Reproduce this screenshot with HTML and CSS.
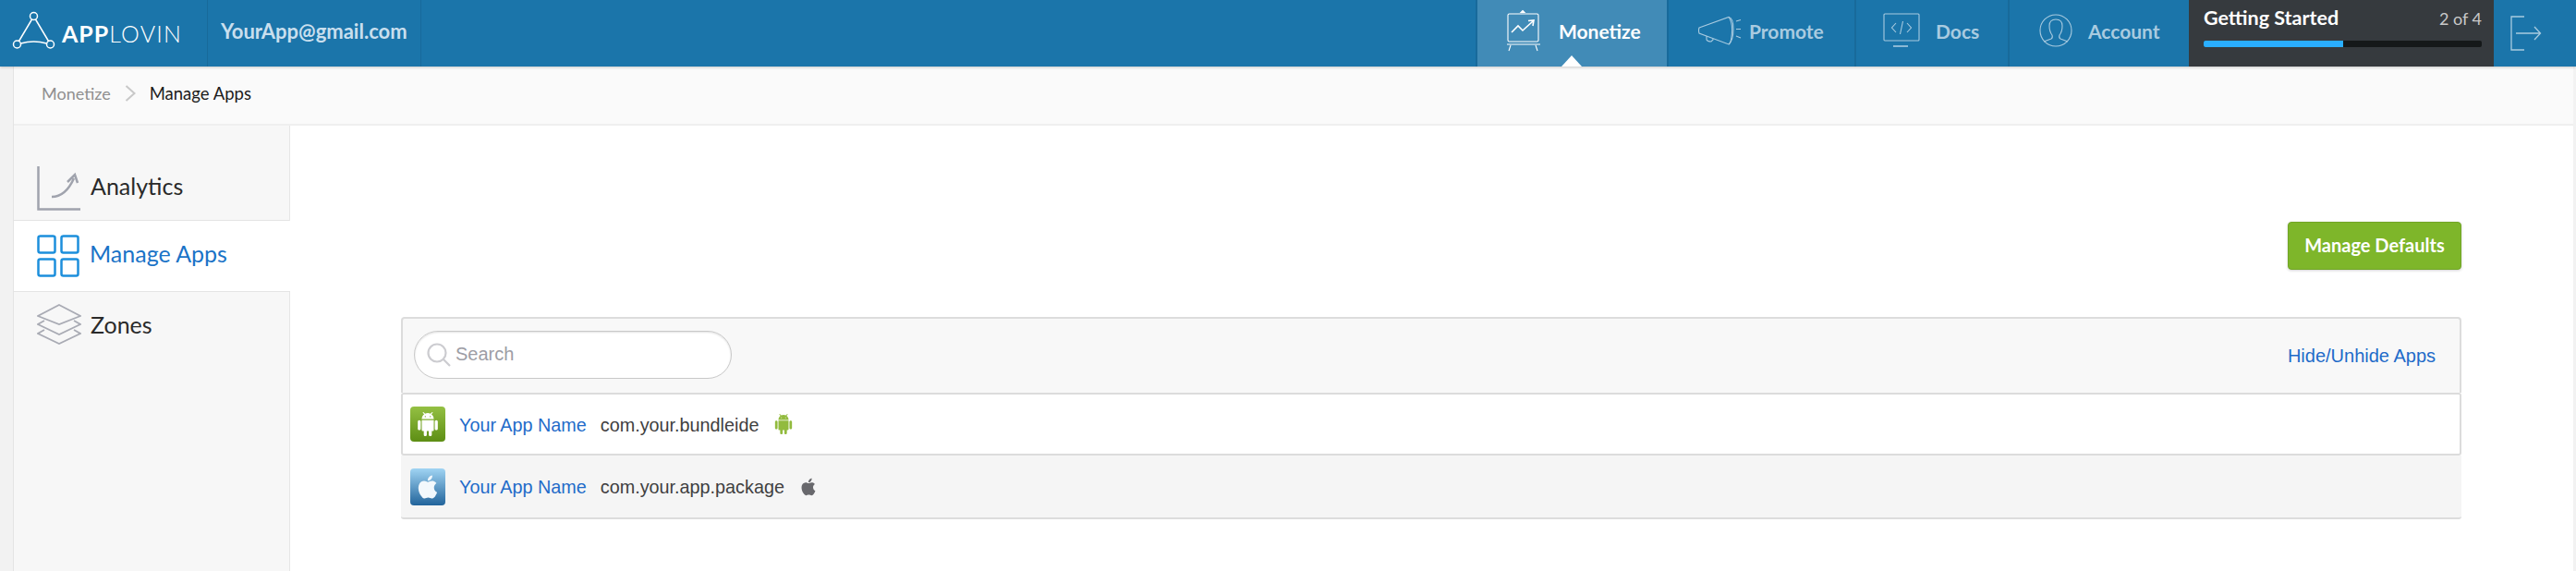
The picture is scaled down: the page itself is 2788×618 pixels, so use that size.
FILE: index.html
```html
<!DOCTYPE html>
<html lang="en">
<head>
  <meta charset="UTF-8" />
  <title>AppLovin - Manage Apps</title>
  <link rel="stylesheet" href="styles.css">
</head>
<body>
  <svg class="defs" width="0" height="0">
    <symbol id="android" viewBox="0 0 24 24"><path d="M6 18c0 .55.45 1 1 1h1v3.5c0 .83.67 1.5 1.5 1.5s1.5-.67 1.5-1.5V19h2v3.5c0 .83.67 1.5 1.5 1.5s1.5-.67 1.5-1.5V19h1c.55 0 1-.45 1-1V8H6v10zM3.5 8C2.67 8 2 8.67 2 9.5v7c0 .83.67 1.5 1.5 1.5S5 17.33 5 16.5v-7C5 8.67 4.33 8 3.5 8zm17 0c-.83 0-1.5.67-1.5 1.5v7c0 .83.67 1.5 1.5 1.5s1.5-.67 1.5-1.5v-7c0-.83-.67-1.5-1.5-1.5zm-4.97-5.84l1.3-1.3c.2-.2.2-.51 0-.71-.2-.2-.51-.2-.71 0l-1.48 1.48C13.85 1.23 12.95 1 12 1c-.96 0-1.86.23-2.66.63L7.85.15c-.2-.2-.51-.2-.71 0-.2.2-.2.51 0 .71l1.31 1.31C6.97 3.26 6 5.01 6 7h12c0-1.99-.97-3.75-2.47-4.84zM10 5H9V4h1v1zm5 0h-1V4h1v1z"/></symbol>
    <symbol id="apple" viewBox="0 0 24 24"><path d="M18.71 19.5c-.83 1.24-1.71 2.45-3.05 2.47-1.34.03-1.77-.79-3.29-.79-1.53 0-2 .77-3.27.82-1.31.05-2.3-1.32-3.14-2.53C4.25 17 2.94 12.45 4.7 9.39c.87-1.52 2.43-2.48 4.12-2.51 1.28-.02 2.5.87 3.29.87.78 0 2.26-1.07 3.81-.91.65.03 2.47.26 3.64 1.98-.09.06-2.17 1.28-2.15 3.81.03 3.02 2.65 4.03 2.68 4.04-.03.07-.42 1.44-1.38 2.83M13 3.5c.73-.83 1.94-1.46 2.94-1.5.13 1.17-.34 2.35-1.04 3.19-.69.85-1.83 1.51-2.95 1.42-.15-1.15.41-2.35 1.05-3.11z"/></symbol>
  </svg>

  <header class="topbar">
    <div class="brand">
      <svg class="brand-mark" width="48" height="44" viewBox="0 0 48 44" fill="none" stroke="#fff" stroke-width="1.5">
        <circle cx="23.5" cy="5.5" r="4"/>
        <circle cx="5.5" cy="36" r="4"/>
        <circle cx="41.5" cy="36" r="4"/>
        <path d="M21.5 9 7.5 32.5M25.5 9 39.5 32.5M9.5 35Q23.5 31 37.5 35"/>
      </svg>
      <span class="brand-name"><b>APP</b>LOVIN</span>
    </div>
    <div class="account-email">YourApp@gmail.com</div>
    <nav class="nav">
      <a class="nav-item active nav-monetize">
        <svg width="38" height="46" viewBox="0 0 38 46" fill="none" stroke="#fff" stroke-width="1.1">
          <path d="M18 1.5l2 2h-4z" fill="#fff"/>
          <rect x="2" y="5" width="33" height="30" rx="1.5"/>
          <path d="M1 38h36M5 39l-2 6M32 39l2 6"/>
          <path d="M6 25l7-7 5 5 11-10M24 12.5l6-.5-1 6" stroke-width="1.6"/>
        </svg>
        Monetize
      </a>
      <a class="nav-item nav-promote">
        <svg width="48" height="32" viewBox="0 0 48 32" fill="none" stroke="#a9cbe0" stroke-width="1.1">
          <path d="M1 13 33 1.500Q38 8 36 23q-1 7-3 8L1 19q-1-3 0-6z"/>
          <path d="M33 1.500q5 1 5 13t-5 16.500"/>
          <path d="M9 22v4q1 2 5 2l2-2v-1"/>
          <path d="M41 6l5-1.500M41 14.500h5M41 22l5 2"/>
        </svg>
        Promote
      </a>
      <a class="nav-item nav-docs">
        <svg width="40" height="38" viewBox="0 0 40 38" fill="none" stroke="#a9cbe0" stroke-width="1.1">
          <rect x="1" y="1" width="38" height="29" rx="1"/>
          <path d="M11 36h16" stroke-width="1.6"/>
          <path d="M14 11l-4.500 5 4.500 5M26 11l4.500 5-4.500 5M21.500 9l-3 14"/>
        </svg>
        Docs
      </a>
      <a class="nav-item nav-account">
        <svg width="36" height="36" viewBox="0 0 36 36" fill="none" stroke="#a9cbe0" stroke-width="1.1">
          <circle cx="18" cy="18" r="17"/>
          <path d="M5 30l8-3q2-1 1-4-3-4-3-10 0-7 7-7t7 7q0 6-3 10-1 3 1 4l8 3"/>
        </svg>
        Account
      </a>
    </nav>
    <div class="progress-box">
      <div class="progress-head"><span class="progress-title">Getting Started</span><span class="progress-count">2 of 4</span></div>
      <div class="progress-track"><div class="progress-fill" style="width: 50%"></div></div>
    </div>
    <a class="logout">
      <svg width="34" height="38" viewBox="0 0 34 38" fill="none" stroke="#a9cbe0" stroke-width="1.3">
        <path d="M15 1H1v36h14M6 19h26M26 12l6.500 7-6.500 7"/>
      </svg>
    </a>
  </header>

  <div class="page">
    <div class="breadcrumb">
      <span class="crumb">Monetize</span>
      <svg width="12" height="18" viewBox="0 0 12 18" fill="none" stroke="#c8c8c8" stroke-width="2"><path d="M1.500 1l9 8-9 8"/></svg>
      <span class="crumb-current">Manage Apps</span>
    </div>

    <div class="content">
      <aside class="sidebar">
        <a class="side-item side-analytics">
          <svg width="48" height="48" viewBox="0 0 48 48" fill="none" stroke="#a0a3ad" stroke-width="2.500">
            <path d="M1.500 0v46.500H47"/>
            <path d="M16 33q15 0 24-20M33 17l8-8 3 9"/>
          </svg>
          <span class="side-label">Analytics</span>
        </a>
        <a class="side-item active side-manage">
          <svg width="46" height="46" viewBox="0 0 46 46" fill="none" stroke="#1c8fdc" stroke-width="2.500">
            <rect x="1.500" y="1.500" width="18" height="18" rx="2"/>
            <rect x="26.500" y="1.500" width="18" height="18" rx="2"/>
            <rect x="1.500" y="26.500" width="18" height="18" rx="2"/>
            <rect x="26.500" y="26.500" width="18" height="18" rx="2"/>
          </svg>
          <span class="side-label">Manage Apps</span>
        </a>
        <a class="side-item side-zones">
          <svg width="48" height="44" viewBox="0 0 48 44" fill="none" stroke="#a9abb4" stroke-width="1.800">
            <path d="M24 1 47 13 24 22 1 13z"/>
            <path d="M8 18 1 22l23 11 23-11-7-4"/>
            <path d="M8 28l-7 4 23 11 23-11-7-4"/>
          </svg>
          <span>Zones</span>
        </a>
      </aside>

      <main class="main">
        <div class="actions"><button class="btn-green">Manage Defaults</button></div>

        <section class="panel">
          <div class="toolbar">
            <label class="search">
              <svg width="26" height="26" viewBox="0 0 26 26" fill="none" stroke="#ccccd0" stroke-width="2.200">
                <circle cx="11" cy="11" r="9.500"/>
                <path d="M18 18l7 7"/>
              </svg>
              <span class="search-hint">Search</span>
            </label>
            <a class="hide-link">Hide/Unhide Apps</a>
          </div>
          <div class="app-row row-first">
            <span class="app-icon icon-android"><svg width="26" height="26"><use href="#android"/></svg></span>
            <a class="app-name">Your App Name</a>
            <span class="app-package">com.your.bundleide</span>
            <svg class="os-android" width="22" height="22"><use href="#android"/></svg>
          </div>
          <div class="app-row row-second">
            <span class="app-icon icon-apple"><svg width="30" height="30"><use href="#apple"/></svg></span>
            <a class="app-name">Your App Name</a>
            <span class="app-package">com.your.app.package</span>
            <svg class="os-apple" width="22" height="22"><use href="#apple"/></svg>
          </div>
        </section>
      </main>
    </div>
  </div>
</body>
</html>
```
FILE: styles.css
```css
* {
  box-sizing: border-box;
}

html, body {
  height: 618px;
  overflow: hidden;
}

body {
  margin: 0;
  background-color: #f2f2f2;
  font-family: 'Lato', 'Open Sans', sans-serif;
  display: flex;
  flex-direction: column;
}

.defs {
  display: none;
}

/* top bar */
.topbar {
  height: 72px;
  flex: none;
  display: flex;
  background-color: #1b75aa;
  color: #fff;
  box-shadow: 0 1px 3px rgba(0, 0, 0, 0.2);
  position: relative;
  z-index: 2;
}

.brand {
  width: 225px;
  padding: 12px 0 0 13px;
  display: flex;
  align-items: flex-start;
  border-right: 1px solid #186a9b;
}

.brand-mark {
  flex: none;
}

.brand-name {
  margin: 9px 0 0 6px;
  font-size: 25px;
  font-weight: 300;
  letter-spacing: 1.2px;
}

.brand-name b {
  font-weight: 700;
  letter-spacing: 1px;
}

.account-email {
  width: 231px;
  padding-left: 14px;
  display: flex;
  align-items: center;
  font-size: 22px;
  font-weight: 700;
  color: #c9dfee;
  border-right: 1px solid #186a9b;
  padding-bottom: 6px;
}

.nav {
  display: flex;
  margin-left: auto;
}

.nav-item {
  height: 72px;
  display: flex;
  align-items: center;
  font-size: 21px;
  font-weight: 700;
  color: #a9cbe0;
  border-left: 2px solid #186a9b;
  position: relative;
  padding-bottom: 6px;
}

.nav-monetize {
  width: 207px;
  padding-left: 31px;
  gap: 19px;
}

.nav-promote {
  width: 203px;
  padding-left: 32px;
  gap: 7px;
}

.nav-docs {
  width: 166px;
  padding-left: 29px;
  gap: 17px;
}

.nav-account {
  width: 196px;
  padding-left: 32px;
  gap: 17px;
}

.nav-item.active {
  background-color: #418bb7;
  color: #fff;
}

.nav-item.active::after {
  content: "";
  position: absolute;
  left: 91px;
  bottom: 0;
  border-left: 11px solid transparent;
  border-right: 11px solid transparent;
  border-bottom: 12px solid #fff;
}

.progress-box {
  width: 330px;
  padding: 6px 13px 0 16px;
  background-color: #363a3e;
}

.progress-head {
  display: flex;
  justify-content: space-between;
  align-items: baseline;
}

.progress-title {
  font-size: 21.5px;
  font-weight: 700;
  color: #fff;
}

.progress-count {
  font-size: 18px;
  color: #c8c8c8;
}

.progress-track {
  height: 7px;
  margin-top: 12px;
  border-radius: 2px;
  background-color: #151819;
}

.progress-fill {
  height: 7px;
  border-radius: 2px 0 0 2px;
  background-color: #2aaeff;
}

.logout {
  width: 89px;
  padding: 17px 0 0 18px;
}

/* page */
.page {
  flex: 1;
  min-height: 0;
  margin: 0 3px 0 14px;
  border-left: 1px solid #e4e4e4;
  display: flex;
  flex-direction: column;
  background-color: #fff;
}

.breadcrumb {
  height: 64px;
  flex: none;
  display: flex;
  align-items: center;
  gap: 15px;
  padding: 0 0 4px 30px;
  background-color: #fafafa;
  border-bottom: 2px solid #efefef;
  font-size: 18px;
}

.crumb {
  color: #8f8f8f;
}

.crumb-current {
  color: #1c1c1c;
  font-size: 18.5px;
}

.content {
  flex: 1;
  min-height: 0;
  display: flex;
}

/* sidebar */
.sidebar {
  width: 299px;
  flex: none;
  padding-top: 34px;
  background-color: #f7f7f7;
  border-right: 1px solid #e6e6e6;
}

.side-item {
  display: flex;
  align-items: center;
  gap: 10px;
  padding-left: 25px;
  font-size: 25px;
  color: #2a2a2a;
}

.side-label {
  padding-bottom: 6px;
}

.side-analytics {
  height: 69px;
  border-bottom: 1px solid #e4e4e4;
}

.side-manage {
  height: 77px;
  gap: 11px;
  border-bottom: 1px solid #e4e4e4;
  margin-right: -1px;
}

.side-zones {
  height: 70px;
}

.side-item.active {
  background-color: #fff;
  color: #1a73c7;
}

/* main */
.main {
  flex: 1;
  padding: 104px 121px 0 120px;
}

.actions {
  display: flex;
  justify-content: flex-end;
}

.btn-green {
  width: 188px;
  height: 52px;
  padding: 0 0 3px;
  background-color: #7eb62a;
  border: 1px solid #71a526;
  border-radius: 4px;
  box-shadow: 0 1px 3px rgba(0, 0, 0, 0.18);
  color: #fff;
  font-family: inherit;
  font-size: 20px;
  font-weight: 700;
}

.panel {
  margin-top: 51px;
  font-family: 'Liberation Sans', Arial, sans-serif;
}

.toolbar {
  height: 82px;
  display: flex;
  align-items: center;
  justify-content: space-between;
  padding: 0 26px 3px 12px;
  background-color: #f8f8f8;
  border: 2px solid #dcdcdc;
  border-bottom: none;
  border-radius: 4px 4px 0 0;
}

.search {
  width: 344px;
  height: 52px;
  display: flex;
  align-items: center;
  gap: 5px;
  padding: 0 0 0 13px;
  background-color: #fff;
  border: 1px solid #c9c9c9;
  border-radius: 26px;
  box-shadow: inset 0 1px 2px rgba(0, 0, 0, 0.12);
}

.search-hint {
  font-size: 20px;
  color: #9d9da5;
}

.hide-link {
  font-size: 20px;
  padding-top: 3px;
  color: #1f6bc9;
}

.app-row {
  display: flex;
  align-items: center;
  font-size: 19.8px;
}

.row-first {
  height: 68px;
  padding-left: 8px;
  background-color: #fff;
  border: 2px solid #dcdcdc;
  border-radius: 3px;
}

.row-second {
  height: 69px;
  padding-left: 10px;
  background-color: #f5f5f5;
  border-bottom: 2px solid #dcdcdc;
  border-radius: 0 0 3px 3px;
}

.app-icon {
  width: 38px;
  height: 38px;
  display: flex;
  align-items: center;
  justify-content: center;
  border-radius: 4px;
  fill: #fff;
}

.icon-android {
  background: linear-gradient(#94c043, #5d8e14);
}

.icon-apple {
  height: 40px;
  background: linear-gradient(#a0d4f3, #22649b);
  fill: #f2f8fc;
}

.app-name {
  margin: 2px 0 0 15px;
  color: #1f6bc9;
}

.app-package {
  margin: 2px 0 0 15px;
  color: #404040;
}

.os-android {
  margin-left: 16px;
  fill: #92bb3e;
}

.os-apple {
  margin-left: 15px;
  fill: #68686c;
}
```
